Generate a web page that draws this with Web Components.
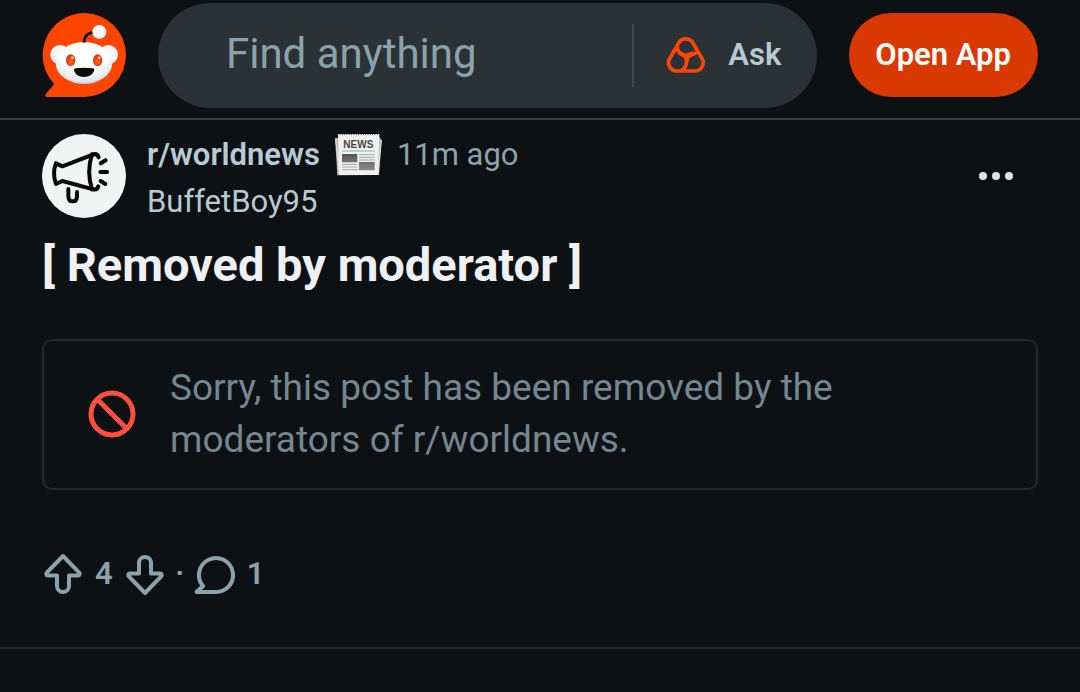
<!DOCTYPE html>
<html lang="en">
<head>
<meta charset="utf-8">
<meta name="viewport" content="width=device-width, initial-scale=1">
<title>r/worldnews</title>
<style>
body { margin: 0; background: #0e1113; color: #8ba2ad; font-family: Roboto, "Liberation Sans", sans-serif; }
</style>
</head>
<body>
<site-header></site-header>
<main>
  <feed-post>
    <a slot="community" href="#community">r/worldnews</a>
    <time slot="time">11m ago</time>
    <a slot="author" href="#author">BuffetBoy95</a>
    <span slot="title">[ Removed by moderator ]</span>
    <removed-notice>Sorry, this post has been removed by the moderators of r/worldnews.</removed-notice>
    <post-actions slot="actions" score="4" comments="1"></post-actions>
  </feed-post>
</main>

<script>
const define = (name, html, setup) => customElements.define(name, class extends HTMLElement {
  connectedCallback() {
    if (this.shadowRoot) return;
    const template = document.createElement('template');
    template.innerHTML = html;
    this.attachShadow({ mode: 'open' }).append(template.content.cloneNode(true));
    if (setup) setup(this, this.shadowRoot);
  }
});

define('brand-logo', `
<style>:host { display: block; flex: none; width: 84px; height: 84px; } svg { display: block; }</style>
<svg width="84" height="84" viewBox="36 39 252 252" aria-hidden="true">
  <defs>
    <radialGradient id="face" cx=".5" cy=".3" r=".75"><stop offset=".55" stop-color="#fff"/><stop offset=".85" stop-color="#dce6ec"/><stop offset="1" stop-color="#9fb4c0"/></radialGradient>
    <radialGradient id="eye" cx=".5" cy=".6" r=".6"><stop offset="0" stop-color="#ff6a1a"/><stop offset="1" stop-color="#d92a10"/></radialGradient>
  </defs>
  <path d="M162 39a126 126 0 0 1 0 252H52c-6 0-8-6-4-10l25-29A126 126 0 0 1 162 39Z" fill="#ff4500"/>
  <circle cx="90" cy="164" r="29" fill="#f5f8fa"/><circle cx="235" cy="164" r="29" fill="#f5f8fa"/>
  <ellipse cx="162" cy="189" rx="85" ry="63" fill="url(#face)"/>
  <path d="M162 128c1-19 12-31 32-31" fill="none" stroke="#111" stroke-width="8"/>
  <circle cx="208" cy="96" r="21" fill="url(#face)"/>
  <ellipse cx="122" cy="181" rx="14" ry="18" fill="url(#eye)"/><ellipse cx="203" cy="181" rx="14" ry="18" fill="url(#eye)"/>
  <circle cx="127" cy="173" r="4" fill="#ffc4a8"/><circle cx="208" cy="173" r="4" fill="#ffc4a8"/>
  <path d="M137 205q25-3 51 0 6 0 5 6c-4 13-16 20-31 20s-27-7-30-20q-1-6 5-6Z" fill="#0b0d0e"/>
</svg>`);

define('search-bar', `
<style>
:host { display: block; flex: 1; min-width: 0; }
form { display: flex; align-items: center; height: 105px; box-sizing: border-box; padding: 0 36px 0 68px; border-radius: 53px; background: #2a3236; }
input { flex: 1; min-width: 0; height: 64px; margin: 0 0 4px; padding: 0; border: 0; outline: 0; background: none; color: #8ba2ad; font: 42px Roboto, "Liberation Sans", sans-serif; }
input::placeholder { color: #8ba2ad; opacity: 1; }
button { display: flex; align-items: center; gap: 21px; box-sizing: border-box; height: 63px; padding: 0 0 2px 31px; border: 0; border-left: 2px solid #3e474b; background: none; color: #b7cad4; font: 600 31px/40px Roboto, "Liberation Sans", sans-serif; }
svg { display: block; }
</style>
<form role="search">
  <input type="text" placeholder="Find anything" aria-label="Find anything">
  <button type="button">
    <svg width="42" height="40" viewBox="195 105 126 120" fill="none" stroke="#ff4500" stroke-width="11" stroke-linejoin="round" aria-hidden="true">
      <path d="M232 213H285A25 25 0 0 0 305 174L279 129A25 25 0 0 0 236 129L210 174A25 25 0 0 0 232 213Z"/>
      <path d="M232 138A26 26 0 0 0 258 167C270 160 280 159 291 159M234 156C250 161 260 173 260 186Q258 202 246 212M260 186A25 25 0 0 1 284 162"/>
    </svg>
    <span>Ask</span>
  </button>
</form>`);

define('site-header', `
<style>
:host { display: block; border-bottom: 2px solid #3a3f42; }
header { display: flex; align-items: center; gap: 32px; padding: 3px 42px 10px; }
brand-logo, .open { margin: 0 0 1px; }
.open { flex: none; height: 84px; padding: 0 27px 1px 26px; border: 0; border-radius: 42px; background: #d93900; color: #fff; font: 600 31px/40px Roboto, "Liberation Sans", sans-serif; }
</style>
<header>
  <brand-logo></brand-logo>
  <search-bar></search-bar>
  <button class="open" type="button">Open App</button>
</header>`);

define('community-avatar', `
<style>:host { display: block; flex: none; width: 84px; height: 84px; } svg { display: block; }</style>
<svg width="84" height="84" viewBox="36 27 252 252" fill="none" stroke="#080808" stroke-width="12" stroke-linecap="round" stroke-linejoin="round" aria-hidden="true">
  <circle cx="162" cy="153" r="126" fill="#f2f4f3" stroke="none"/>
  <path d="M78 115Q66 145 78 177L97 168L190 193M78 115L97 124L190 88"/>
  <path d="M186 88Q169 140 186 193M190 88Q202 85 206 97M190 193Q202 196 205 184"/>
  <path d="M115 192v20q0 17 13 17t13-17v-11M212 115l15-9M211 141h20M212 168l14 9"/>
</svg>`);

define('news-flair', `
<style>:host { display: block; flex: none; margin: -1px 0; } svg { display: block; }</style>
<svg width="49" height="44" viewBox="45 24 147 132" role="img" aria-label="News">
  <defs><linearGradient id="block" x2="0" y2="1"><stop stop-color="#555"/><stop offset="1" stop-color="#8b8b8b"/></linearGradient></defs>
  <path d="M48 39 180 35 188 45 180 150 55 151Z" fill="#b9b9b9"/>
  <path d="M50 43 62 150M187 45 177 149" stroke="#e6e6e6" stroke-width="3"/>
  <path d="M57 30H181L177 150H60Z" fill="#f0f0ee"/>
  <path d="M57 29H181" stroke="#e9e9e9" stroke-width="4" stroke-dasharray="5 2"/>
  <text x="118" y="69" text-anchor="middle" font-family="Liberation Sans, sans-serif" font-size="30" font-weight="700" fill="#484848">NEWS</text>
  <path d="M69 78H167" stroke="#a4c4cc" stroke-width="5"/>
  <path d="M69 87h46v25H69ZM120 111h47v25h-47Z" fill="url(#block)"/>
  <path d="M120 89h47M120 97h47M120 105h47M69 118h46M69 126h46M69 134h46" stroke="#a5a5a5" stroke-width="3"/>
</svg>`);

define('feed-post', `
<style>
:host { display: block; padding: 14px 42px 52px; border-bottom: 2px solid #23282b; }
header { display: flex; align-items: flex-start; gap: 21px; }
.meta { flex: 1; min-width: 0; font-size: 31px; line-height: 42px; color: #8ba2ad; }
.line { display: flex; align-items: center; gap: 14px; }
.author { margin-top: 5px; color: #b7cad4; }
::slotted(a) { color: #b7cad4; text-decoration: none; }
::slotted([slot=community]) { font-weight: 600; }
.more { flex: none; width: 84px; height: 84px; padding: 0; border: 0; background: none; }
.more svg { display: block; margin: auto; }
h1 { margin: 13px 0 45px; color: #eef1f3; font-size: 47px; line-height: 58px; font-weight: 700; }
</style>
<article>
  <header>
    <community-avatar></community-avatar>
    <div class="meta">
      <div class="line"><slot name="community"></slot><news-flair></news-flair><slot name="time"></slot></div>
      <div class="author"><slot name="author"></slot></div>
    </div>
    <button class="more" type="button" aria-label="More options">
      <svg width="42" height="42" viewBox="0 0 42 42" fill="#dbe4e9"><circle cx="8" cy="21" r="4"/><circle cx="21" cy="21" r="4"/><circle cx="34" cy="21" r="4"/></svg>
    </button>
  </header>
  <h1><slot name="title"></slot></h1>
  <slot></slot>
  <slot name="actions"></slot>
</article>`);

define('removed-notice', `
<style>
:host { display: flex; align-items: center; gap: 32px; padding: 21px 42px 22px; border: 2px solid #23282b; border-radius: 10px; color: #748791; font-size: 37px; line-height: 52px; }
svg { flex: none; }
p { margin: 0; max-width: 760px; }
</style>
<svg width="52" height="52" viewBox="0 0 52 52" fill="none" stroke="#ff4f40" stroke-width="5" aria-hidden="true"><circle cx="26" cy="26" r="21"/><path d="m11 11 30 30"/></svg>
<p><slot></slot></p>`);

define('post-actions', `
<style>
:host { display: flex; align-items: center; gap: 11px; margin-top: 63px; color: #8ba2ad; font-size: 31px; line-height: 42px; font-weight: 600; }
button { display: flex; align-items: center; gap: 11px; padding: 0; border: 0; background: none; color: inherit; font: inherit; }
svg { display: block; flex: none; fill: none; stroke: currentColor; stroke-width: 4; stroke-linejoin: round; }
.dot { width: 6px; display: flex; justify-content: center; }
</style>
<button type="button" aria-label="Upvote"><svg width="42" height="42" viewBox="0 0 42 42"><path d="M21 3 4.8 19.7c-1.1 1.1-.4 2.8 1.1 2.8h9.1v10.5a6 6 0 0 0 12 0v-10.5h9.1c1.5 0 2.2-1.7 1.1-2.8Z"/></svg></button>
<span id="score"></span>
<button type="button" aria-label="Downvote"><svg width="42" height="42" viewBox="0 0 42 42"><path transform="rotate(180 21 21.5)" d="M21 3 4.8 19.7c-1.1 1.1-.4 2.8 1.1 2.8h9.1v10.5a6 6 0 0 0 12 0v-10.5h9.1c1.5 0 2.2-1.7 1.1-2.8Z"/></svg></button>
<span class="dot">·</span>
<button type="button"><svg width="42" height="42" viewBox="0 0 42 42" aria-hidden="true"><path d="M21 39H2.5L9 33A17 17 0 1 1 21 39Z"/></svg><span id="comments"></span></button>`,
(host, root) => {
  for (const key of ['score', 'comments']) root.getElementById(key).textContent = host.getAttribute(key);
});
</script>
</body>
</html>
